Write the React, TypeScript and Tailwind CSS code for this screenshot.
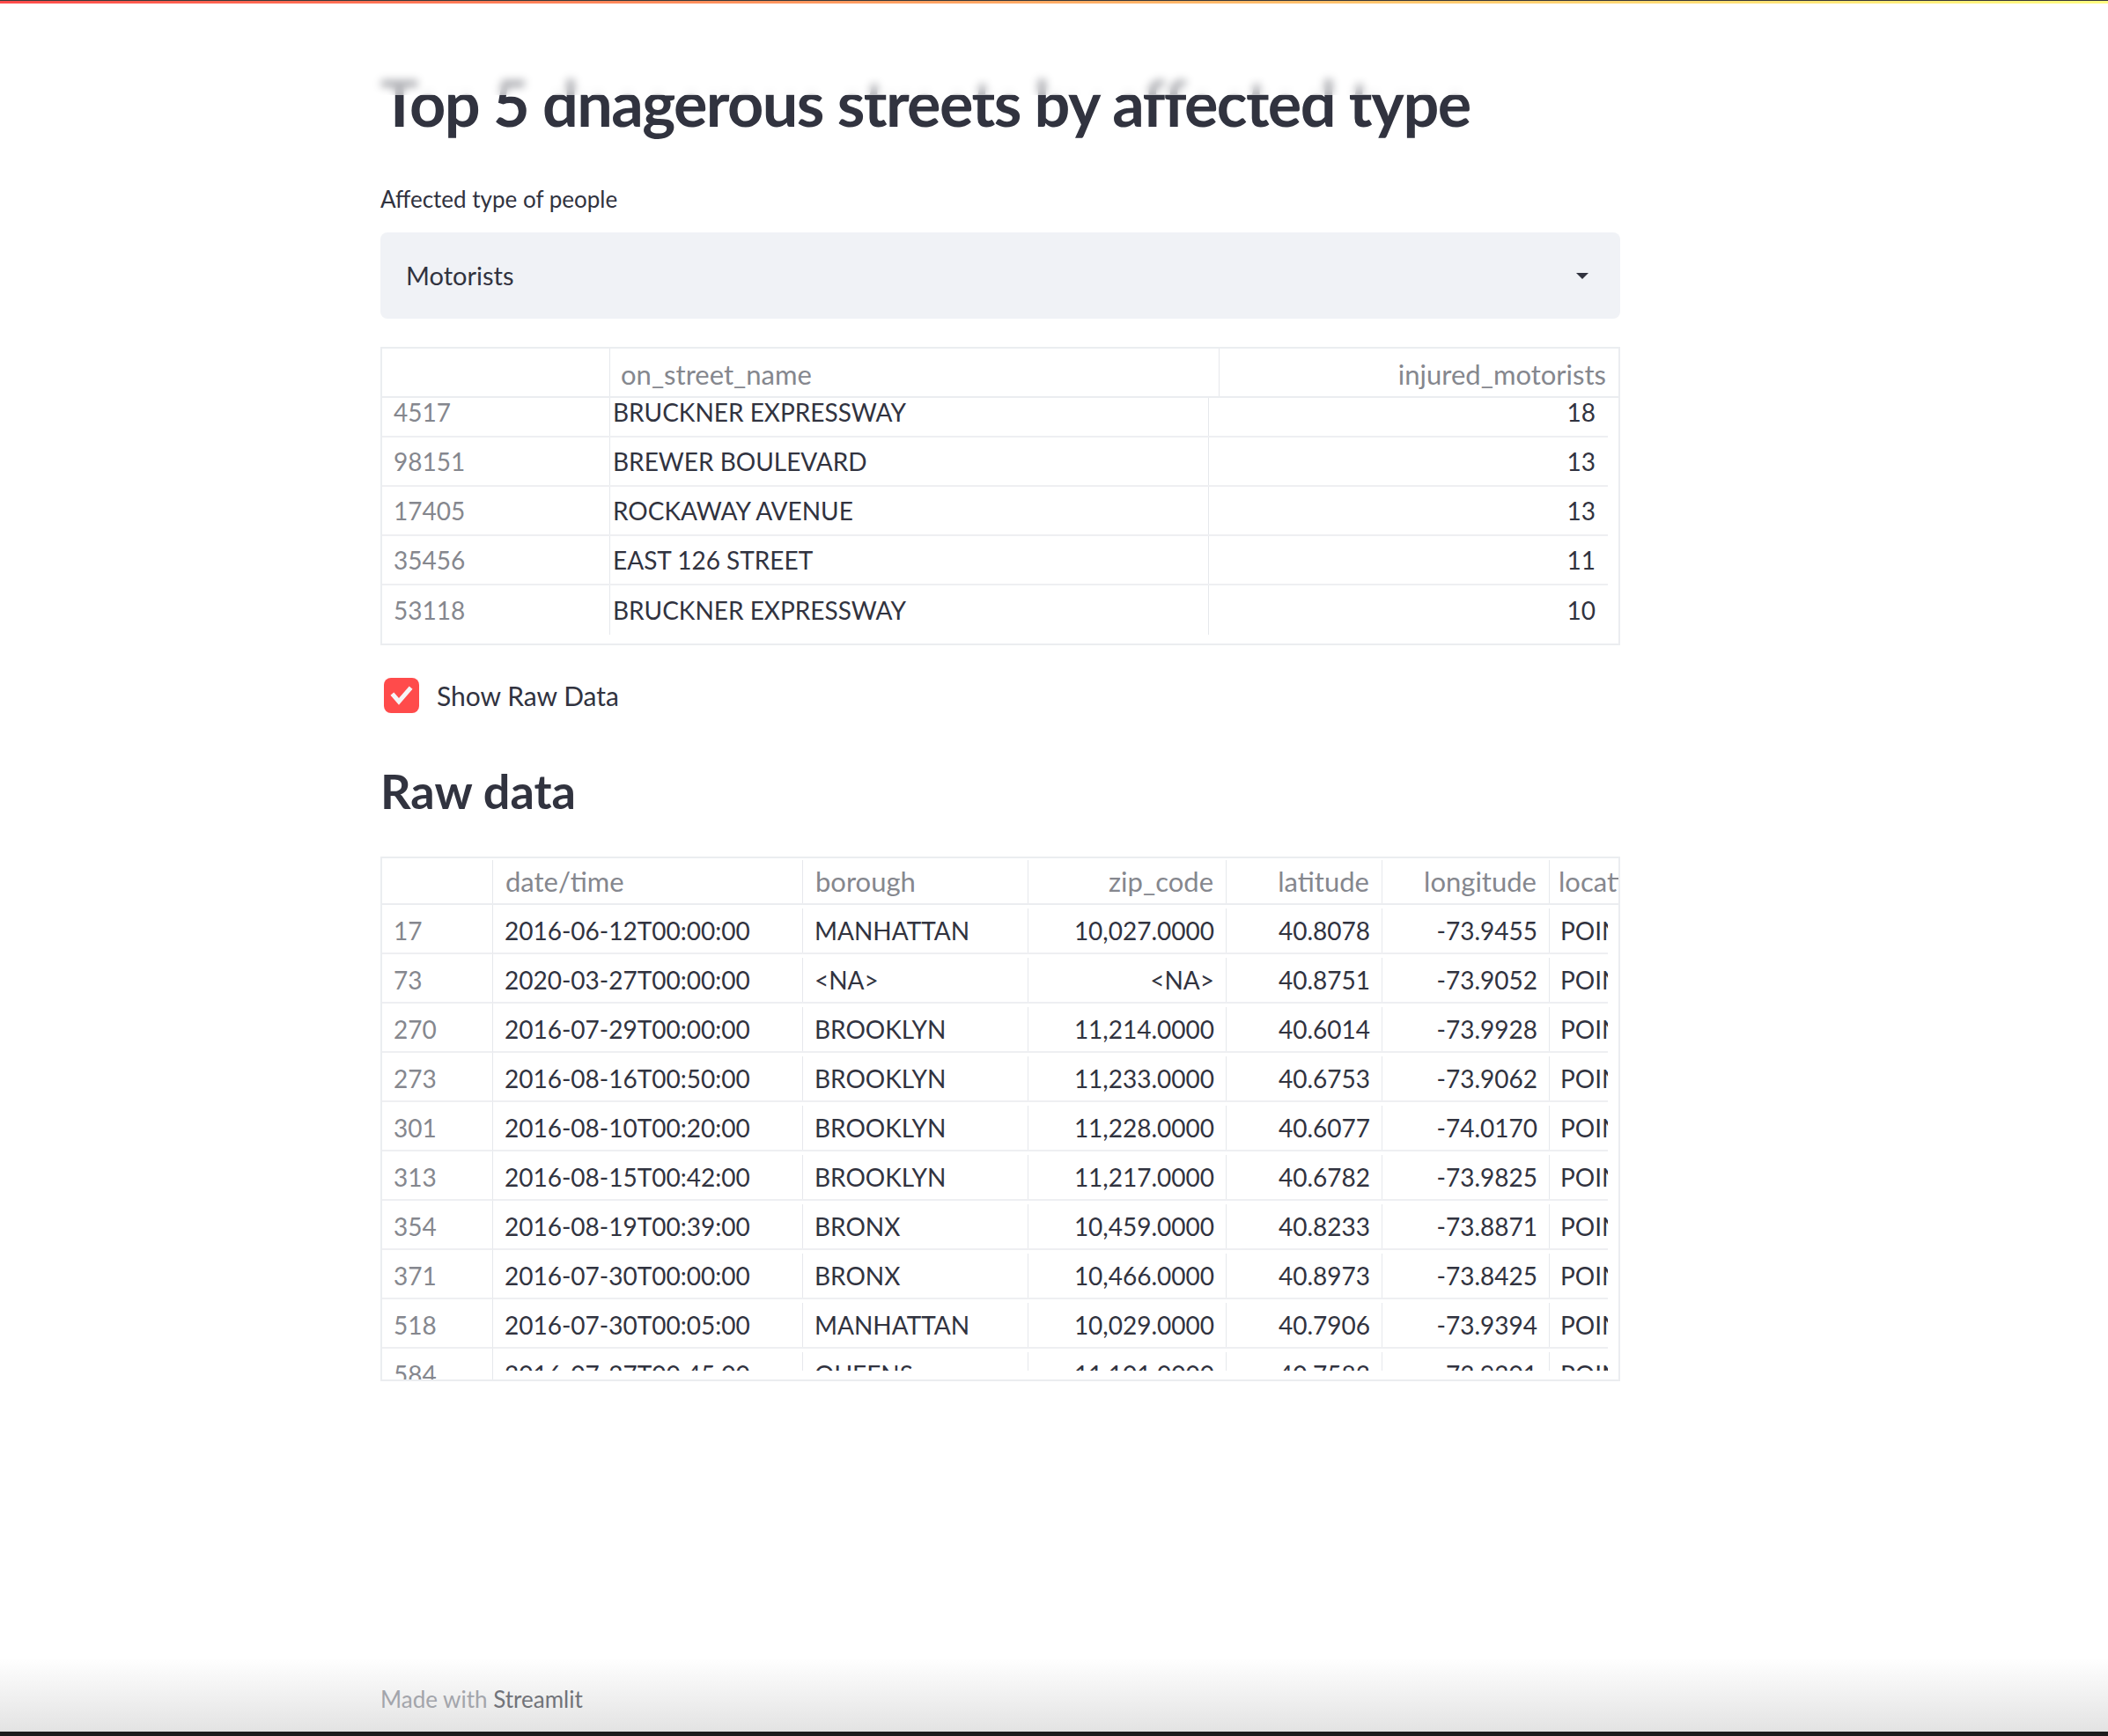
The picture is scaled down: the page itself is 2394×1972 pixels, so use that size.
import React from 'react';

const topStreets = [
  { idx: '4517', street: 'BRUCKNER EXPRESSWAY', injured: 18 },
  { idx: '98151', street: 'BREWER BOULEVARD', injured: 13 },
  { idx: '17405', street: 'ROCKAWAY AVENUE', injured: 13 },
  { idx: '35456', street: 'EAST 126 STREET', injured: 11 },
  { idx: '53118', street: 'BRUCKNER EXPRESSWAY', injured: 10 },
];

const rawRows = [
  ['17', '2016-06-12T00:00:00', 'MANHATTAN', '10,027.0000', '40.8078', '-73.9455'],
  ['73', '2020-03-27T00:00:00', '<NA>', '<NA>', '40.8751', '-73.9052'],
  ['270', '2016-07-29T00:00:00', 'BROOKLYN', '11,214.0000', '40.6014', '-73.9928'],
  ['273', '2016-08-16T00:50:00', 'BROOKLYN', '11,233.0000', '40.6753', '-73.9062'],
  ['301', '2016-08-10T00:20:00', 'BROOKLYN', '11,228.0000', '40.6077', '-74.0170'],
  ['313', '2016-08-15T00:42:00', 'BROOKLYN', '11,217.0000', '40.6782', '-73.9825'],
  ['354', '2016-08-19T00:39:00', 'BRONX', '10,459.0000', '40.8233', '-73.8871'],
  ['371', '2016-07-30T00:00:00', 'BRONX', '10,466.0000', '40.8973', '-73.8425'],
  ['518', '2016-07-30T00:05:00', 'MANHATTAN', '10,029.0000', '40.7906', '-73.9394'],
  ['584', '2016-07-27T00:45:00', 'QUEENS', '11,101.0000', '40.7583', '-73.9201'],
];

function StreetsTable() {
  return (
    <div className="mt-[32px] flex h-[339px] flex-col border-2 border-[#ebedf0]">
      {/* header */}
      <div className="z-[1] flex h-[56px] shrink-0 border-b-2 border-[#ebedf0] bg-white text-[31px] text-[#85878e]">
        <div className="w-[259px] shrink-0 border-r border-[#e6e8ec]" />
        <div className="flex w-[692px] shrink-0 items-center border-r border-[#e6e8ec] px-[12px] pt-[4px]">
          on_street_name
        </div>
        <div className="flex flex-1 items-center justify-end px-[14px] pt-[4px]">injured_motorists</div>
      </div>
      {/* body, first row sits partly under the header */}
      <div className="flex-1 overflow-hidden pr-[12px]">
        <div className="-mt-[11px]">
          {topStreets.map((r, i) => (
            <div
              key={r.idx}
              className={`flex h-[56px] text-[28px] ${i < topStreets.length - 1 ? 'border-b-2 border-[#eeeff2]' : ''}`}
            >
              <div className="flex w-[259px] shrink-0 items-center border-r border-[#e6e8ec] px-[13px] text-[#85878e]">
                {r.idx}
              </div>
              <div className="flex w-[680px] shrink-0 items-center border-r border-[#e6e8ec] px-[3px] text-[#31333f]">
                {r.street}
              </div>
              <div className="flex flex-1 items-center justify-end px-[14px] text-[#31333f]">{r.injured}</div>
            </div>
          ))}
        </div>
      </div>
    </div>
  );
}

const rawCols = [
  { name: 'date/time', w: 'w-[352px]', right: false },
  { name: 'borough', w: 'w-[256px]', right: false },
  { name: 'zip_code', w: 'w-[225px]', right: true },
  { name: 'latitude', w: 'w-[177px]', right: true },
  { name: 'longitude', w: 'w-[190px]', right: true },
];

function RawTable() {
  return (
    <div className="mt-[41px] flex h-[596px] flex-col border-2 border-[#ebedf0]">
      <div className="flex h-[53px] shrink-0 border-b-2 border-[#ebedf0] pt-[2px] text-[31px] text-[#85878e]">
        <div className="w-[126px] shrink-0 border-r border-[#e6e8ec]" />
        {rawCols.map((c) => (
          <div
            key={c.name}
            className={`flex ${c.w} shrink-0 items-center border-r border-[#e6e8ec] px-[14px] ${c.right ? 'justify-end' : ''}`}
          >
            {c.name}
          </div>
        ))}
        <div className="flex min-w-0 flex-1 items-center overflow-hidden whitespace-nowrap pl-[10px]">location</div>
      </div>
      <div className="flex min-h-0 flex-1">
        {/* fixed index column */}
        <div className="w-[126px] shrink-0 overflow-hidden">
          {rawRows.map((r) => (
            <div
              key={r[0]}
              className="flex h-[56px] items-center border-b-2 border-r border-[#eeeff2] border-r-[#e6e8ec] px-[13px] pt-[4px] text-[28px] text-[#85878e]"
            >
              {r[0]}
            </div>
          ))}
        </div>
        <div className="flex min-w-0 flex-1 flex-col">
          <div className="mr-[12px] h-[529px] overflow-hidden">
            {rawRows.map((r) => (
              <div key={r[0]} className="flex h-[56px] whitespace-nowrap border-b-2 border-[#eeeff2] pt-[4px] text-[28px] text-[#31333f]">
                {rawCols.map((c, j) => (
                  <div
                    key={c.name}
                    className={`flex ${c.w} shrink-0 items-center border-r border-[#e6e8ec] px-[13px] ${c.right ? 'justify-end' : ''}`}
                  >
                    {r[j + 1]}
                  </div>
                ))}
                <div className="flex shrink-0 items-center pl-[12px]">
                  POINT ({r[5]} {r[4]})
                </div>
              </div>
            ))}
          </div>
          <div className="h-[10px]" />
        </div>
      </div>
    </div>
  );
}

export default function App() {
  return (
    <div className="flex h-[1972px] flex-col bg-white font-['Lato','Liberation_Sans',sans-serif] text-[#31333f]">
      {/* translucent app header with decoration bar */}
      <header className="fixed inset-x-0 top-0 z-10 h-[108px] bg-white/60 backdrop-blur-[5px]">
        <div className="h-px bg-[#3a3a3a]" />
        <div className="h-[3px] bg-gradient-to-r from-[#ff4b4b] to-[#fffd80]" />
      </header>

      <main className="ml-[432px] w-[1408px] pt-[71px]">
        <h1 className="text-[72px] font-bold leading-[91px] tracking-[-1.6px]">
          Top 5 dnagerous streets by affected type
        </h1>

        <label className="mt-[44px] block text-[26px] leading-[40px]">Affected type of people</label>
        <div className="mt-[18px] flex h-[98px] items-center justify-between rounded-[8px] bg-[#f0f2f6] pl-[29px] pr-[36px]">
          <span className="text-[29px]">Motorists</span>
          <svg width="14" height="7" viewBox="0 0 14 7">
            <path d="M0 0h14L7 7z" fill="#31333f" />
          </svg>
        </div>

        <StreetsTable />

        <label className="mt-[37px] flex h-[40px] items-center gap-[20px]">
          <span className="ml-[4px] flex h-[40px] w-[40px] items-center justify-center rounded-[8px] bg-[#ff4b4b]">
            <svg width="40" height="40" viewBox="0 0 40 40">
              <polyline points="11,20 17,27 29,13" fill="none" stroke="#f5f5f7" strokeWidth="5" strokeLinecap="square" />
            </svg>
          </span>
          <span className="text-[30px]">Show Raw Data</span>
        </label>

        <h2 className="mt-[57px] text-[54px] font-bold leading-[1.2]">Raw data</h2>

        <RawTable />
      </main>

      <div className="flex-1" />

      <footer className="h-[84px] bg-gradient-to-b from-white to-[#e3e3e3]">
        <div className="ml-[432px] w-[1408px] pt-[30px] text-[26px] leading-[34px] text-[#a3a5ab]">
          Made with <span className="text-[#717379]">Streamlit</span>
        </div>
      </footer>
      <div className="h-[5px] bg-[#1c1c1c]" />
    </div>
  );
}
